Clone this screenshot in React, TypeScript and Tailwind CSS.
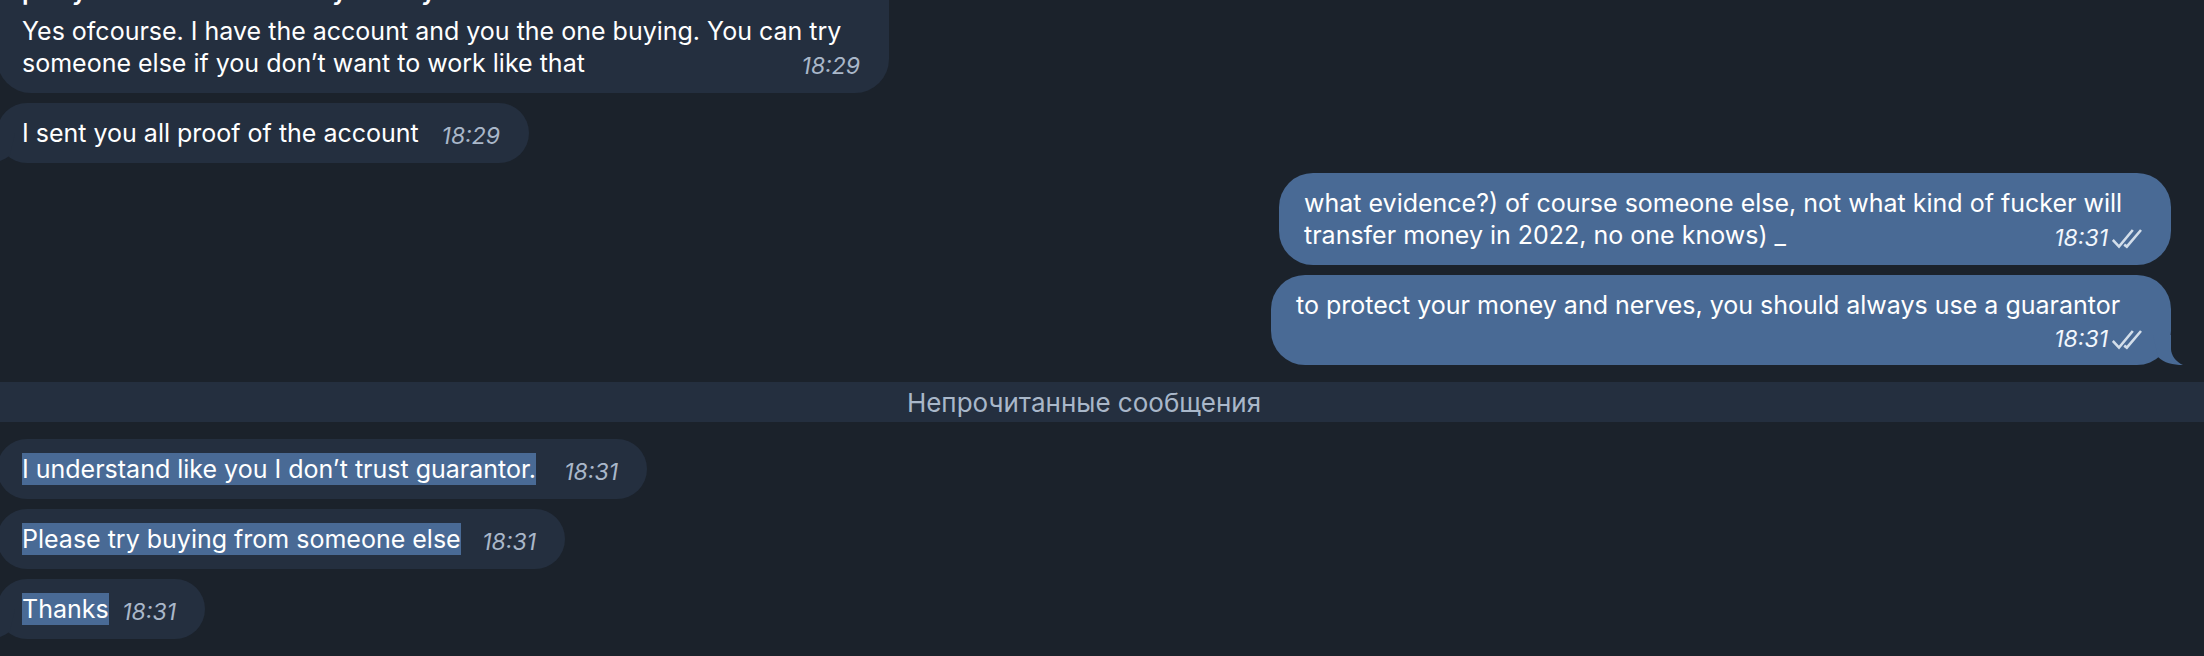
interface Message {
    id: number;
    quote?: string;
    lines: string[];
    time: string;
    out?: boolean;
    tail?: boolean;
    selected?: boolean;
    width: string;
}

const readMessages: Message[] = [
    {
        id: 1,
        quote: 'party has now seen money at they',
        lines: [
            'Yes ofcourse. I have the account and you the one buying. You can try',
            'someone else if you don’t want to work like that',
        ],
        time: '18:29',
        width: 'min-w-[892px]',
    },
    {
        id: 2,
        lines: ['I sent you all proof of the account'],
        time: '18:29',
        tail: true,
        width: 'min-w-[532px]',
    },
    {
        id: 3,
        lines: [
            'what evidence?) of course someone else, not what kind of fucker will',
            'transfer money in 2022, no one knows) _',
        ],
        time: '18:31',
        out: true,
        width: 'min-w-[892px]',
    },
    {
        id: 4,
        lines: ['to protect your money and nerves, you should always use a guarantor', ''],
        time: '18:31',
        out: true,
        tail: true,
        width: 'min-w-[900px]',
    },
];

const unreadMessages: Message[] = [
    {
        id: 5,
        lines: ['I understand like you I don’t trust guarantor.'],
        time: '18:31',
        selected: true,
        width: 'min-w-[650px]',
    },
    {
        id: 6,
        lines: ['Please try buying from someone else'],
        time: '18:31',
        selected: true,
        width: 'min-w-[568px]',
    },
    { id: 7, lines: ['Thanks'], time: '18:31', selected: true, tail: true, width: 'min-w-[208px]' },
];

function Checks() {
    return (
        <svg
            className="mt-[3px]"
            width="30"
            height="20"
            viewBox="0 0 30 20"
            fill="none"
            stroke="#d3deea"
            strokeWidth="2.6"
            role="img"
            aria-label="Read"
        >
            <path d="M0.8 11 L7 17.6 L20.8 1" />
            <path d="M12.2 15.6 L14.8 17.6 L29 1" />
        </svg>
    );
}

function Time({ value, out }: { value: string; out?: boolean }) {
    return (
        <span className={`flex items-center gap-1 pt-[5px] text-[23px] leading-8 italic ${out ? 'text-[#f2f7fd]' : 'text-[#a9b7c9]'}`}>
            <time>{value}</time>
            {out && <Checks />}
        </span>
    );
}

function Tail({ out }: { out?: boolean }) {
    return (
        <svg
            className={`absolute bottom-0 ${out ? '-right-3 text-[#496a95]' : '-left-3 -scale-x-100 text-[#242f3f]'}`}
            width="30"
            height="30"
            viewBox="0 0 30 30"
            fill="currentColor"
            aria-hidden="true"
        >
            <path d="M0 0 H18 V14 C18 20 23 27 30 30 C20 30 11 28 5 22 Z" />
        </svg>
    );
}

function Bubble({ message }: { message: Message }) {
    const { quote, lines, time, out, tail, selected, width } = message;
    const last = lines[lines.length - 1];

    return (
        <li
            className={`relative w-fit rounded-[34px] py-[14px] pr-[29px] ${width} ${
                out ? 'mr-[33px] self-end bg-[#496a95] pl-[25px]' : '-ml-[3px] bg-[#242f3f] pl-[25px]'
            }`}
        >
            {quote && <p className="mb-2 font-semibold">{quote}</p>}
            {lines.slice(0, -1).map((line) => (
                <p key={line}>{line}</p>
            ))}
            <div className={`flex justify-between gap-3 ${last ? 'h-8' : 'h-[30px]'}`}>
                <p className={selected ? 'bg-[#496a95]' : ''}>{last}</p>
                <Time value={time} out={out} />
            </div>
            {tail && <Tail out={out} />}
        </li>
    );
}

export default function App() {
    return (
        <main className="flex min-h-screen flex-col overflow-hidden bg-[#1b222b] font-['Inter','Noto_Sans',sans-serif] text-[25px] leading-8 text-white">
            <ul className="-mt-[39px] flex flex-col gap-[10px]">
                {readMessages.map((message) => (
                    <Bubble key={message.id} message={message} />
                ))}
            </ul>
            <h2 className="my-[17px] bg-[#242f3f] pt-[5px] pr-9 pb-[3px] text-center text-[26px] leading-8 text-[#a9b7c9]">
                Непрочитанные сообщения
            </h2>
            <ul className="flex flex-col gap-[10px] pb-4">
                {unreadMessages.map((message) => (
                    <Bubble key={message.id} message={message} />
                ))}
            </ul>
        </main>
    );
}
